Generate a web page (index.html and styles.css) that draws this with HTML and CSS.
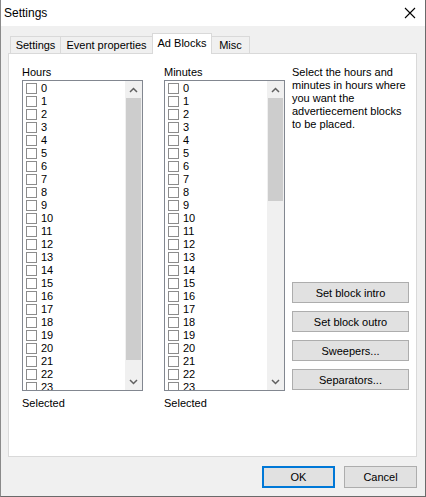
FILE: index.html
```html
<!DOCTYPE html>
<html>
<head>
<meta charset="utf-8">
<link rel="stylesheet" href="styles.css">
</head>
<body>
<div class="window">
  <div class="titlebar">
    <span class="title">Settings</span>
    <span class="close">
      <svg width="12" height="12" viewBox="0 0 12 12"><path d="M1 1 L11 11 M11 1 L1 11" stroke="#000" stroke-width="1.1" fill="none"/></svg>
    </span>
  </div>
  <div class="client">
    <div class="tabs">
      <div class="tab t-settings">Settings</div>
      <div class="tab t-event">Event properties</div>
      <div class="tab t-ad active">Ad Blocks</div>
      <div class="tab t-misc">Misc</div>
    </div>
    <div class="panel">
      <div class="grid">
        <div class="label">Hours</div>
        <div class="listbox">
          <div class="items">
            <div class="row"><span class="cb"></span>0</div>
            <div class="row"><span class="cb"></span>1</div>
            <div class="row"><span class="cb"></span>2</div>
            <div class="row"><span class="cb"></span>3</div>
            <div class="row"><span class="cb"></span>4</div>
            <div class="row"><span class="cb"></span>5</div>
            <div class="row"><span class="cb"></span>6</div>
            <div class="row"><span class="cb"></span>7</div>
            <div class="row"><span class="cb"></span>8</div>
            <div class="row"><span class="cb"></span>9</div>
            <div class="row"><span class="cb"></span>10</div>
            <div class="row"><span class="cb"></span>11</div>
            <div class="row"><span class="cb"></span>12</div>
            <div class="row"><span class="cb"></span>13</div>
            <div class="row"><span class="cb"></span>14</div>
            <div class="row"><span class="cb"></span>15</div>
            <div class="row"><span class="cb"></span>16</div>
            <div class="row"><span class="cb"></span>17</div>
            <div class="row"><span class="cb"></span>18</div>
            <div class="row"><span class="cb"></span>19</div>
            <div class="row"><span class="cb"></span>20</div>
            <div class="row"><span class="cb"></span>21</div>
            <div class="row"><span class="cb"></span>22</div>
            <div class="row"><span class="cb"></span>23</div>
          </div>
          <div class="scrollbar">
            <div class="arrow"><svg width="9" height="6" viewBox="0 0 9 6"><path d="M1 5 L4.5 1.5 L8 5" stroke="#606060" stroke-width="1.5" fill="none"/></svg></div>
            <div class="track"><div class="thumb thumb-hours"></div></div>
            <div class="arrow"><svg width="9" height="6" viewBox="0 0 9 6"><path d="M1 1 L4.5 4.5 L8 1" stroke="#606060" stroke-width="1.5" fill="none"/></svg></div>
          </div>
        </div>
        <div class="selected">Selected</div>

        <div class="label">Minutes</div>
        <div class="listbox">
          <div class="items">
            <div class="row"><span class="cb"></span>0</div>
            <div class="row"><span class="cb"></span>1</div>
            <div class="row"><span class="cb"></span>2</div>
            <div class="row"><span class="cb"></span>3</div>
            <div class="row"><span class="cb"></span>4</div>
            <div class="row"><span class="cb"></span>5</div>
            <div class="row"><span class="cb"></span>6</div>
            <div class="row"><span class="cb"></span>7</div>
            <div class="row"><span class="cb"></span>8</div>
            <div class="row"><span class="cb"></span>9</div>
            <div class="row"><span class="cb"></span>10</div>
            <div class="row"><span class="cb"></span>11</div>
            <div class="row"><span class="cb"></span>12</div>
            <div class="row"><span class="cb"></span>13</div>
            <div class="row"><span class="cb"></span>14</div>
            <div class="row"><span class="cb"></span>15</div>
            <div class="row"><span class="cb"></span>16</div>
            <div class="row"><span class="cb"></span>17</div>
            <div class="row"><span class="cb"></span>18</div>
            <div class="row"><span class="cb"></span>19</div>
            <div class="row"><span class="cb"></span>20</div>
            <div class="row"><span class="cb"></span>21</div>
            <div class="row"><span class="cb"></span>22</div>
            <div class="row"><span class="cb"></span>23</div>
          </div>
          <div class="scrollbar">
            <div class="arrow"><svg width="9" height="6" viewBox="0 0 9 6"><path d="M1 5 L4.5 1.5 L8 5" stroke="#606060" stroke-width="1.5" fill="none"/></svg></div>
            <div class="track"><div class="thumb thumb-minutes"></div></div>
            <div class="arrow"><svg width="9" height="6" viewBox="0 0 9 6"><path d="M1 1 L4.5 4.5 L8 1" stroke="#606060" stroke-width="1.5" fill="none"/></svg></div>
          </div>
        </div>
        <div class="selected">Selected</div>

        <div class="side">
          <div class="desc">Select the hours and<br>minutes in hours where<br>you want the<br>advertiecement blocks<br>to be placed.</div>
          <div class="buttons">
            <div class="btn">Set block intro</div>
            <div class="btn">Set block outro</div>
            <div class="btn">Sweepers...</div>
            <div class="btn">Separators...</div>
          </div>
        </div>
      </div>
    </div>
    <div class="footer">
      <div class="btn dlg default">OK</div>
      <div class="btn dlg">Cancel</div>
    </div>
  </div>
</div>
</body>
</html>
```
FILE: styles.css
```css
html, body {
  margin: 0;
  padding: 0;
  background: #f0f0f0;
}
body {
  font-family: "Liberation Sans", Arial, sans-serif;
  font-size: 11px;
  color: #000;
}
.window {
  width: 426px;
  height: 497px;
  box-sizing: border-box;
  border-left: 1px solid #8a8a8a;
  border-right: 1px solid #6a6a6a;
  border-bottom: 1px solid #6a6a6a;
  display: flex;
  flex-direction: column;
  background: #f0f0f0;
}
.titlebar {
  height: 26px;
  background: #fff;
  display: flex;
  align-items: center;
  justify-content: space-between;
  padding: 0 9px 0 3px;
  flex: none;
}
.title {
  font-size: 12px;
  line-height: 14px;
  padding-top: 0;
}
.close {
  display: flex;
  width: 12px;
  height: 12px;
  margin-top: 0;
}
.client {
  flex: 1;
  padding: 8px 8px 8px 7px;
  display: flex;
  flex-direction: column;
}
.tabs {
  height: 19px;
  display: flex;
  align-items: flex-end;
  padding-left: 2px;
  position: relative;
  z-index: 2;
}
.tab {
  box-sizing: border-box;
  height: 17px;
  border: 1px solid #d9d9d9;
  border-bottom: none;
  background: #f0f0f0;
  text-align: center;
  line-height: 16px;
  margin-left: -1px;
  white-space: nowrap;
}
.tab:first-child { margin-left: 0; }
.t-settings { width: 51px; }
.t-event { width: 93px; }
.t-ad { width: 60px; }
.t-misc { width: 39px; }
.tab.active {
  height: 21px;
  background: #fff;
  margin-bottom: -1px;
  line-height: 18px;
  position: relative;
  z-index: 3;
}
.panel {
  box-sizing: border-box;
  height: 404px;
  background: #fff;
  border: 1px solid #d9d9d9;
  padding: 12px 0 0 13px;
}
.grid {
  display: grid;
  grid-template-columns: 121px 121px 118px;
  grid-template-rows: 14px 311px auto;
  grid-auto-flow: column;
  column-gap: 21px;
}
.grid .side {
  grid-column: 3;
  grid-row: 1 / 3;
  margin-left: -14px;
  display: flex;
  flex-direction: column;
  justify-content: space-between;
  padding-bottom: 1px;
}
.label {
  line-height: 13px;
}
.selected {
  line-height: 13px;
  margin-top: 6px;
}
.listbox {
  box-sizing: border-box;
  border: 1px solid #828790;
  display: flex;
  overflow: hidden;
  background: #fff;
}
.items {
  flex: 1;
  padding: 1px 0 0 3px;
  overflow: hidden;
}
.row {
  height: 13px;
  line-height: 13px;
  display: flex;
  align-items: center;
  white-space: nowrap;
}
.cb {
  box-sizing: border-box;
  width: 11px;
  height: 11px;
  border: 1px solid #8c8c8c;
  background: #fff;
  margin-right: 4px;
  flex: none;
}
.scrollbar {
  width: 17px;
  display: flex;
  flex-direction: column;
  background: #f0f0f0;
  flex: none;
}
.arrow {
  height: 17px;
  display: flex;
  align-items: center;
  justify-content: center;
  flex: none;
}
.track {
  flex: 1;
}
.thumb {
  background: #cdcdcd;
  margin: 0 1px;
}
.thumb-hours { height: 262px; }
.thumb-minutes { height: 103px; }
.desc {
  line-height: 13px;
  white-space: nowrap;
}
.buttons {
  display: flex;
  flex-direction: column;
  gap: 8px;
  width: 117px;
}
.btn {
  box-sizing: border-box;
  height: 21px;
  background: #e1e1e1;
  border: 1px solid #adadad;
  display: flex;
  align-items: center;
  justify-content: center;
  white-space: nowrap;
}
.footer {
  display: flex;
  justify-content: flex-end;
  gap: 9px;
  margin-top: 9px;
  padding-right: 0;
}
.btn.dlg {
  width: 73px;
  height: 22px;
}
.btn.default {
  border: 2px solid #0078d7;
}
```
